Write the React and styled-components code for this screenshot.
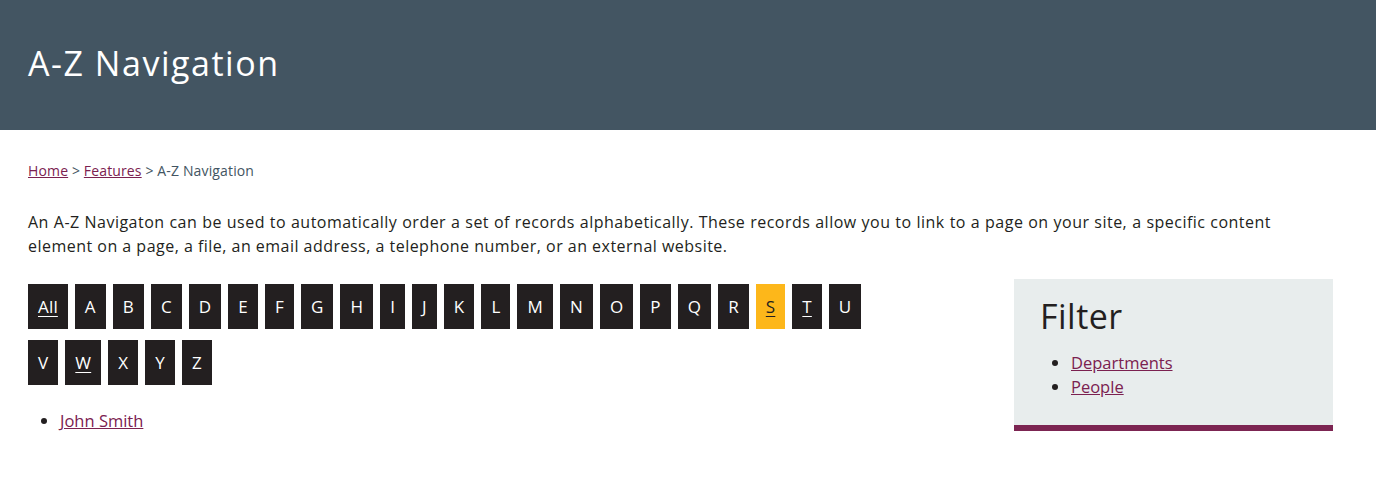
import React from "react";
import styled, { createGlobalStyle } from "styled-components";

const GlobalStyle = createGlobalStyle`
  html, body {
    margin: 0;
    padding: 0;
    background: #ffffff;
    font-family: "Open Sans", "Noto Sans", sans-serif;
    color: #231f20;
    letter-spacing: 0.03em;
  }
`;

/* ------------------ HEADER ------------------ */
const Header = styled.header`
  background: #435562;
  height: 130px;
  display: flex;
  align-items: center;
  padding: 0 28px 4px;
  box-sizing: border-box;

  h1 {
    margin: 0;
    color: #ffffff;
    font-size: 34px;
    font-weight: 400;
    letter-spacing: 0.045em;
  }
`;

/* ------------------ PAGE ------------------ */
const Page = styled.main`
  padding: 28px 43px 40px 28px;
`;

const Breadcrumb = styled.nav`
  font-size: 14px;
  color: #435562;
  margin-top: 3px;
  letter-spacing: 0.01em;

  a {
    color: #7b2150;
  }
`;

const Intro = styled.p`
  font-size: 16px;
  line-height: 24px;
  text-align: justify;
  max-width: 1243px;
  margin: 30px 0 21px;
`;

const Columns = styled.div`
  display: flex;
  justify-content: space-between;
  align-items: flex-start;
`;

const Main = styled.div`
  width: 866px;
  padding-top: 5px;
`;

/* ------------------ LETTERS ------------------ */
const Letters = styled.div`
  display: flex;
  flex-wrap: wrap;
  gap: 11px 7px;
`;

const Letter = styled.a`
  display: flex;
  align-items: center;
  justify-content: center;
  height: 45px;
  padding: 0 10px;
  font-size: 17px;
  letter-spacing: 0.01em;
  color: ${({ $active }) => ($active ? "#231f20" : "#ffffff")};
  background: ${({ $active }) => ($active ? "#fdb71a" : "#231f20")};
  text-decoration: ${({ $linked }) => ($linked ? "underline" : "none")};
  text-underline-offset: 3px;
`;

const Results = styled.ul`
  margin: 24px 0 0;
  padding-left: 32px;
  font-size: 16.5px;
  line-height: 24px;
  letter-spacing: 0;

  a {
    color: #7b2150;
  }
`;

/* ------------------ FILTER ------------------ */
const Filter = styled.aside`
  width: 319px;
  box-sizing: border-box;
  background: #e8eded;
  border-bottom: 6px solid #7c2552;
  padding: 14px 26px 26px;

  h2 {
    margin: 0 0 12px;
    font-size: 34px;
    font-weight: 400;
  }

  ul {
    margin: 0;
    padding-left: 31px;
    font-size: 16.5px;
    line-height: 24px;
    letter-spacing: 0;
  }

  a {
    color: #7b2150;
  }
`;

const letters = [
  { label: "All", linked: true },
  ..."ABCDEFGHIJKLMNOPQR".split("").map((l) => ({ label: l })),
  { label: "S", linked: true, active: true },
  { label: "T", linked: true },
  { label: "U" },
  { label: "V" },
  { label: "W", linked: true },
  { label: "X" },
  { label: "Y" },
  { label: "Z" },
];

const App = () => {
  return (
    <>
      <GlobalStyle />
      <Header>
        <h1>A-Z Navigation</h1>
      </Header>
      <Page>
        <Breadcrumb>
          <a href="#">Home</a> &gt; <a href="#">Features</a> &gt; A-Z Navigation
        </Breadcrumb>
        <Intro>
          An A-Z Navigaton can be used to automatically order a set of records
          alphabetically. These records allow you to link to a page on your
          site, a specific content element on a page, a file, an email address,
          a telephone number, or an external website.
        </Intro>
        <Columns>
          <Main>
            <Letters>
              {letters.map((l) => (
                <Letter
                  key={l.label}
                  href="#"
                  $linked={l.linked}
                  $active={l.active}
                >
                  {l.label}
                </Letter>
              ))}
            </Letters>
            <Results>
              <li>
                <a href="#">John Smith</a>
              </li>
            </Results>
          </Main>
          <Filter>
            <h2>Filter</h2>
            <ul>
              <li>
                <a href="#">Departments</a>
              </li>
              <li>
                <a href="#">People</a>
              </li>
            </ul>
          </Filter>
        </Columns>
      </Page>
    </>
  );
};

export default App;
